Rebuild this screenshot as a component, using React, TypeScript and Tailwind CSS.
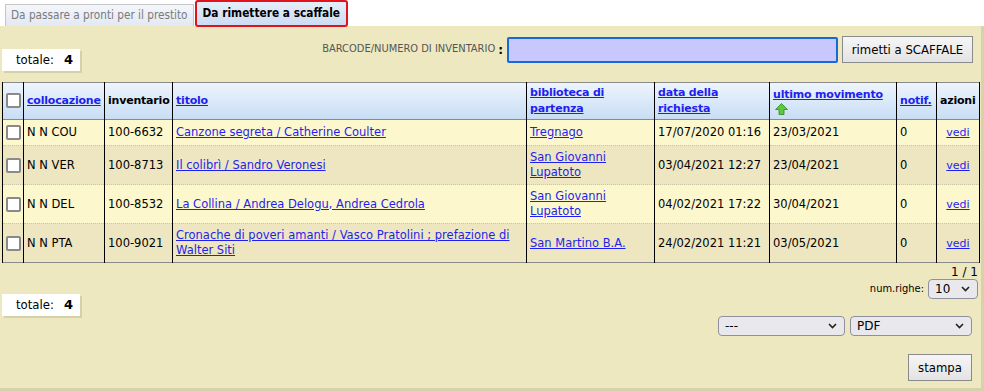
import React from "react";

const verdana = { fontFamily: '"DejaVu Sans", Verdana, sans-serif' };
const tahoma = { fontFamily: '"DejaVu Sans Condensed", "Liberation Sans", Tahoma, sans-serif' };

function Box() {
  return <span className="inline-block w-[15px] h-[15px] border-[2px] border-[#8a8a8a] rounded-[2px] bg-white align-middle" />;
}

function Chevron() {
  return (
    <svg width="9" height="6" viewBox="0 0 9 6" className="absolute right-[7px] top-1/2 -translate-y-1/2">
      <path d="M1 1 L4.5 4.5 L8 1" stroke="#222" strokeWidth="1.6" fill="none" />
    </svg>
  );
}

function Select({ w, label }: { w: string; label: string }) {
  return (
    <div className={`relative ${w} h-[20px] border border-[#8f8f9d] rounded-[4px] bg-[#e9e9ed] text-[12px] text-black pl-[6px] leading-[18px]`} style={verdana}>
      {label}
      <Chevron />
    </div>
  );
}

function Totale() {
  return (
    <div className="w-[78px] h-[22px] bg-white shadow-[2px_2px_0_#d6d0a8] flex items-center text-[13px] text-black" style={tahoma}>
      <span className="ml-[14px]">totale:</span>
      <span className="ml-[10px] font-bold" style={verdana}>4</span>
    </div>
  );
}

const rows = [
  { c: "N N COU", i: "100-6632", t: ["Canzone segreta / Catherine Coulter"], b: ["Tregnago"], d: "17/07/2020 01:16", u: "23/03/2021" },
  { c: "N N VER", i: "100-8713", t: ["Il colibrì / Sandro Veronesi"], b: ["San Giovanni", "Lupatoto"], d: "03/04/2021 12:27", u: "23/04/2021" },
  { c: "N N DEL", i: "100-8532", t: ["La Collina / Andrea Delogu, Andrea Cedrola"], b: ["San Giovanni", "Lupatoto"], d: "04/02/2021 17:22", u: "30/04/2021" },
  { c: "N N PTA", i: "100-9021", t: ["Cronache di poveri amanti / Vasco Pratolini ; prefazione di", "Walter Siti"], b: ["San Martino B.A."], d: "24/02/2021 11:21", u: "03/05/2021" },
];

export default function App() {
  const td = "border-x border-black px-[3px] py-[4px] align-middle whitespace-nowrap overflow-hidden";
  const th = "border-x border-black px-[3px] py-[2px] text-left align-middle font-bold text-[11px] tracking-[-0.2px] whitespace-nowrap";
  const link = "text-[#1f1fee] underline";
  return (
    <div className="w-[984px] h-[391px] bg-white overflow-hidden text-[11.5px] text-black" style={verdana}>
      {/* tabs */}
      <div className="flex items-end h-[26px] pl-[5px] shrink-0">
        <div className="h-[22px] px-[5px] border border-b-0 border-[#c6c6c6] bg-gradient-to-b from-[#f4f6fb] to-[#e2e8f2] text-[#7a7a7a] text-[11.7px] leading-[21px] whitespace-nowrap" style={tahoma}>
          Da passare a pronti per il prestito
        </div>
        <div className="h-[27px] -mb-[1px] ml-[1px] px-[6px] border-[2px] border-[#e0141e] rounded-[3px] bg-gradient-to-b from-[#e6eefa] to-[#cddcf3] font-bold text-[11.8px] leading-[22px] whitespace-nowrap" style={tahoma}>
          Da rimettere a scaffale
        </div>
      </div>
      {/* panel */}
      <div className="h-[365px] bg-[#eee8c0] border-r-[3px] border-b-[3px] border-[#d8d2a8] flex flex-col">
        {/* top bar */}
        <div className="flex items-start h-[56px] shrink-0">
          <div className="mt-[23px] ml-[2px]"><Totale /></div>
          <div className="flex-1" />
          <div className="flex items-center mt-[10px]">
            <span className="text-[11px] text-[#555]" style={tahoma}>BARCODE/NUMERO DI INVENTARIO</span>
            <span className="ml-[3px] mr-[4px] font-bold text-[12px]">:</span>
            <div className="w-[331px] h-[26px] bg-[#c8c8ff] border-[2px] border-[#1769d6] rounded-[2px]" />
            <div className="ml-[4px] w-[131px] h-[27px] border border-[#8a8a8a] bg-gradient-to-b from-[#f6f6f6] to-[#e3e3e3] text-[13px] flex items-center justify-center" style={tahoma}>
              rimetti a SCAFFALE
            </div>
          </div>
          <div className="w-[8px]" />
        </div>
        {/* table */}
        <div className="pl-[2px] pr-[2px] shrink-0">
          <table className="w-[977px] table-fixed border-collapse border border-[#8a8a8a]">
            <colgroup>
              <col className="w-[21px]" />
              <col className="w-[81px]" />
              <col className="w-[68px]" />
              <col className="w-[354px]" />
              <col className="w-[128px]" />
              <col className="w-[115px]" />
              <col className="w-[127px]" />
              <col className="w-[40px]" />
              <col className="w-[43px]" />
            </colgroup>
            <thead>
              <tr className="bg-gradient-to-b from-[#eef5fd] to-[#c8ddf4] border-b border-[#8a8a8a] h-[37px]">
                <th className={`${th} pl-[3px]`}><Box /></th>
                <th className={th}><span className={link}>collocazione</span></th>
                <th className={th}>inventario</th>
                <th className={th}><span className={link}>titolo</span></th>
                <th className={`${th} leading-[16px]`}><span className={link}>biblioteca di<br />partenza</span></th>
                <th className={`${th} leading-[16px]`}><span className={link}>data della<br />richiesta</span></th>
                <th className={`${th} leading-[15px]`}>
                  <span className={link}>ultimo movimento</span>
                  <div className="mt-[1px] ml-[2px] h-[12px]">
                    <svg width="13" height="12" viewBox="0 0 13 12" className="block">
                      <path d="M6.5 0.5 L12.5 6.5 L9 6.5 L9 11.5 L4 11.5 L4 6.5 L0.5 6.5 Z" fill="#5cc83a" stroke="#2e8a1e" strokeWidth="0.8" />
                    </svg>
                  </div>
                </th>
                <th className={th}><span className={link}>notif.</span></th>
                <th className={th}>azioni</th>
              </tr>
            </thead>
            <tbody>
              {rows.map((r, k) => (
                <tr key={k} className={`${k % 2 === 0 ? "bg-[#fcf7cc]" : "bg-[#ede6c0]"} border-b border-dotted border-[#c9c6b0] leading-[15px] h-[26px]`}>
                  <td className={`${td} pl-[3px]`}><Box /></td>
                  <td className={td}>{r.c}</td>
                  <td className={td}>{r.i}</td>
                  <td className={td}><span className={link}>{r.t.map((x, j) => <React.Fragment key={j}>{j > 0 && <br />}{x}</React.Fragment>)}</span></td>
                  <td className={td}><span className={link}>{r.b.map((x, j) => <React.Fragment key={j}>{j > 0 && <br />}{x}</React.Fragment>)}</span></td>
                  <td className={td}>{r.d}</td>
                  <td className={td}>{r.u}</td>
                  <td className={td}>0</td>
                  <td className={`${td} text-center text-[11px]`}><span className={link}>vedi</span></td>
                </tr>
              ))}
            </tbody>
          </table>
        </div>
        {/* pagination */}
        <div className="flex justify-end pr-[3px] mt-[2px] text-[12px] leading-[14px] shrink-0">1 / 1</div>
        <div className="flex justify-end items-center pr-[3px] shrink-0">
          <span className="text-[11px] mr-[4px]" style={tahoma}>num.righe:</span>
          <Select w="w-[50px]" label="10" />
        </div>
        <div className="flex items-start justify-between shrink-0">
          <div className="ml-[2px] -mt-[5px]"><Totale /></div>
          <div className="flex gap-[5px] mt-[17px] mr-[9px]">
            <Select w="w-[127px]" label="---" />
            <Select w="w-[122px]" label="PDF" />
          </div>
        </div>
        <div className="flex justify-end mr-[9px] mt-[18px] shrink-0">
          <div className="w-[64px] h-[27px] border border-[#8a8a8a] bg-gradient-to-b from-[#f6f6f6] to-[#e3e3e3] text-[13px] flex items-center justify-center" style={tahoma}>
            stampa
          </div>
        </div>
      </div>
    </div>
  );
}
